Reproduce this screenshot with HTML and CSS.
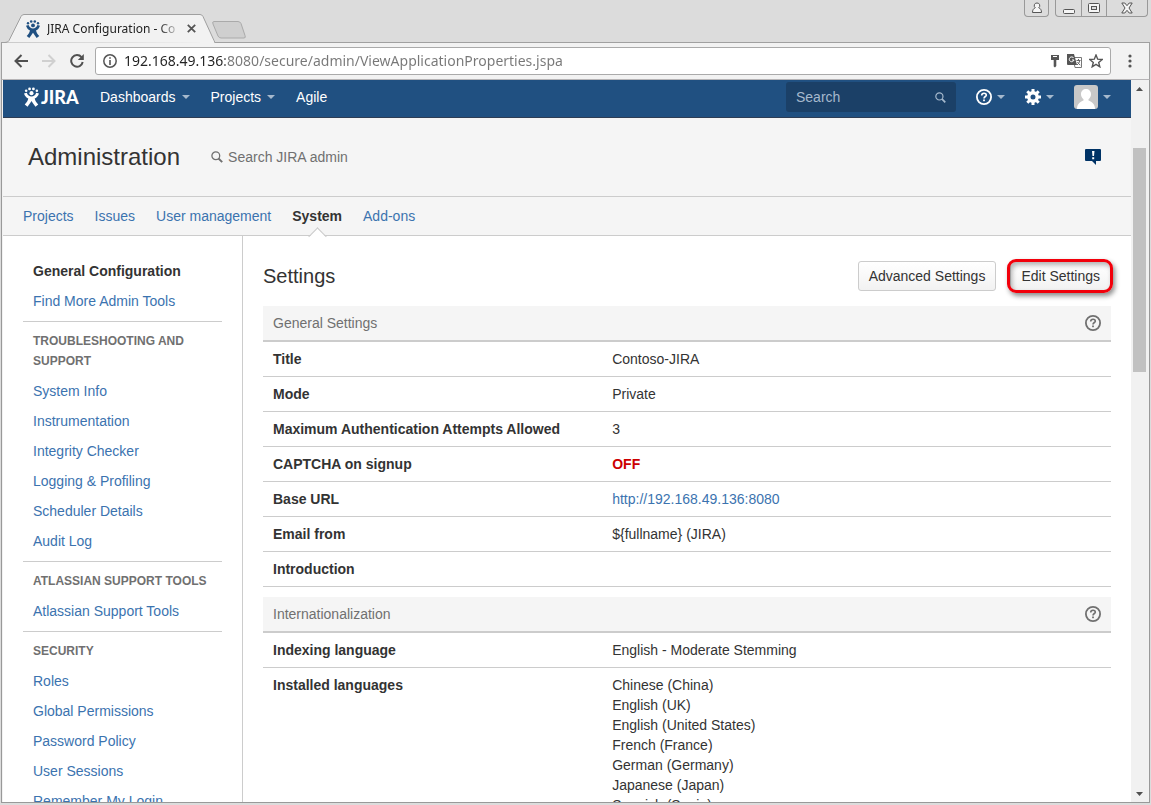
FILE: index.html
```html
<!DOCTYPE html>
<html lang="en">
<head>
<meta charset="utf-8">
<title>JIRA Configuration - Contoso-JIRA</title>
<link rel="stylesheet" href="styles.css">
</head>
<body>
<svg class="defs" aria-hidden="true">
  <symbol id="charlie" viewBox="0 0 14 18">
    <circle cx="2" cy="3.200" r="1.200"/><circle cx="5.200" cy="1.500" r="1.300"/><circle cx="8.800" cy="1.500" r="1.300"/><circle cx="12" cy="3.200" r="1.200"/>
    <circle cx="7" cy="5.400" r="1.900"/>
    <path d="M0 5.800 2.600 5C3.400 7.300 5 8.500 7 8.500S10.600 7.300 11.400 5l2.600.8C13.200 8.200 12 9.600 10 10.500c.5 2.200 1.600 3.800 3.300 5.500L10.700 18C9 16 8.300 14.600 7 12.800 5.700 14.600 5 16 3.300 18L.7 16c1.700-1.700 2.800-3.300 3.300-5.500C2 9.600.8 8.200 0 5.800z"/>
  </symbol>
  <symbol id="help" viewBox="0 0 16 16">
    <circle cx="8" cy="8" r="7.100" fill="none" stroke="currentColor" stroke-width="1.800"/>
    <path d="M5.700 6.500C5.700 5 6.700 4.200 8 4.200s2.300.8 2.300 2S8 7.700 8 9.400" fill="none" stroke="currentColor" stroke-width="1.600"/>
    <rect x="7.100" y="10.500" width="1.800" height="1.700"/>
  </symbol>
  <symbol id="lens" viewBox="0 0 12 12">
    <circle cx="4.800" cy="4.800" r="3.900" fill="none" stroke="currentColor" stroke-width="1.300"/>
    <path d="m7.500 7.500 3.700 3.700" fill="none" stroke="currentColor" stroke-width="1.900"/>
  </symbol>
</svg>
<div class="window">
  <header class="tabstrip">
    <div class="tab">
      <svg class="tab-shape" viewBox="0 0 214 29" aria-hidden="true"><path d="M0 28.500h4q3 0 4-2L20 2.500q1-2 3-2h176q2 0 3 2l11 24q1 2 1 2.500" fill="#f2f2f2" stroke="#a0a0a0"/></svg>
      <svg class="favicon" fill="#205081"><use href="#charlie"/></svg>
      <span class="tab-title">JIRA Configuration - Co</span>
      <button class="tab-close" aria-label="Close tab"><svg width="9" height="9" viewBox="0 0 9 9"><path d="m.8.8 7.400 7.400m0-7.400L.8 8.200" stroke="#555" stroke-width="1.800"/></svg></button>
    </div>
    <button class="new-tab" aria-label="New tab"><svg width="36" height="18" viewBox="0 0 36 18"><path d="M3 .5h24q2 0 3 2l4 12q1 2.500-1 2.500H10q-2 0-3-2L2 3Q1 .5 3 .5z" fill="#cfcfcf" stroke="#aaa"/></svg></button>
    <div class="window-controls">
      <button class="wc wc-user" aria-label="User"><svg width="12" height="12" viewBox="0 0 12 12"><path d="M6 1a2.600 2.600 0 0 1 1.700 4.700C9.500 6.500 10.500 8 10.500 10.500h-9C1.500 8 2.500 6.500 4.300 5.700A2.600 2.600 0 0 1 6 1z" fill="#f5f5f5" stroke="#555"/></svg></button>
      <div class="wc-group">
        <button class="wc" aria-label="Minimize"><svg width="12" height="12" viewBox="0 0 12 12"><rect x=".5" y="7.500" width="11" height="4" rx="1" fill="#f5f5f5" stroke="#555"/></svg></button>
        <button class="wc" aria-label="Restore"><svg width="12" height="12" viewBox="0 0 12 12"><rect x=".5" y="1.500" width="11" height="9" rx="1" fill="#f5f5f5" stroke="#555"/><rect x="3.500" y="4.500" width="5" height="3" fill="#dedede" stroke="#555"/></svg></button>
        <button class="wc wc-close" aria-label="Close"><svg width="12" height="12" viewBox="0 0 12 12"><path d="M.8 1h3L6 3.700 8.200 1h3L8 6l3.200 5h-3L6 8.300 3.800 11h-3L4 6z" fill="#f5f5f5" stroke="#555"/></svg></button>
      </div>
    </div>
  </header>

  <div class="toolbar">
    <button class="tool" aria-label="Back"><svg width="14" height="14" viewBox="0 0 14 14"><path d="M14 7H1.500M7.500 1 1.500 7l6 6" fill="none" stroke="#505050" stroke-width="2"/></svg></button>
    <button class="tool" aria-label="Forward" disabled><svg width="14" height="14" viewBox="0 0 14 14"><path d="M0 7h12.500M6.500 1l6 6-6 6" fill="none" stroke="#d0d0d0" stroke-width="2"/></svg></button>
    <button class="tool" aria-label="Reload"><svg width="14" height="14" viewBox="0 0 14 14"><path d="M11.500 3.200A5.800 5.800 0 1 0 12.700 8" fill="none" stroke="#505050" stroke-width="2"/><path d="M13.800 0v6H7.800z" fill="#505050"/></svg></button>
    <div class="omnibox">
      <svg width="14" height="14" viewBox="0 0 14 14" aria-hidden="true"><circle cx="7" cy="7" r="6.200" fill="none" stroke="#555" stroke-width="1.500"/><path d="M6.200 3.200h1.600v1.600H6.200zm0 2.800h1.600v5H6.200z" fill="#555"/></svg>
      <input class="url" type="text" aria-label="Address" value="192.168.49.136:8080/secure/admin/ViewApplicationProperties.jspa">
      <svg width="10" height="14" viewBox="0 0 10 14" aria-hidden="true"><path d="M1 1h8v5H6.300v6L5 13.500 3.700 12.500V6H1z" fill="#555"/><path d="M3 2.500h4" stroke="#fff"/></svg>
      <svg width="15" height="14" viewBox="0 0 15 14" aria-hidden="true"><path d="M6 3.500h8.500v10H8z" fill="#fff" stroke="#777"/><path d="M0 0h7l3 11H1q-1 0-1-1z" fill="#555"/><path d="M6.700 4A2.400 2.400 0 1 0 7 6H5" fill="none" stroke="#fff"/><path d="M9.500 6.500h4M11.500 5v1.500m1.300 0q-.5 3-2.800 4.500m.5-3q1 2 2.800 3" fill="none" stroke="#666"/></svg>
      <svg width="14" height="14" viewBox="0 0 14 14" aria-hidden="true"><path d="m7 1 1.700 4.200 4.500.3-3.500 2.900 1.100 4.400L7 10.400l-3.800 2.400 1.100-4.400L.8 5.500l4.500-.3z" fill="none" stroke="#555" stroke-width="1.400"/></svg>
    </div>
    <button class="tool menu" aria-label="Menu"><svg width="4" height="14" viewBox="0 0 4 14" fill="#555"><circle cx="2" cy="2" r="1.600"/><circle cx="2" cy="7" r="1.600"/><circle cx="2" cy="12" r="1.600"/></svg></button>
  </div>

  <div class="viewport">
    <div class="page">
      <header class="jira-header">
        <a class="logo" href="#"><svg class="logo-mark" fill="#fff" aria-hidden="true"><use href="#charlie"/></svg>JIRA</a>
        <nav class="main-nav" aria-label="Main">
          <button class="drop">Dashboards</button>
          <button class="drop">Projects</button>
          <button>Agile</button>
        </nav>
        <div class="quick-search">
          <input type="text" placeholder="Search" aria-label="Search">
          <svg width="11" height="11"><use href="#lens"/></svg>
        </div>
        <div class="user-nav">
          <button class="drop" aria-label="Help"><svg width="16" height="16" fill="currentColor"><use href="#help"/></svg></button>
          <button class="drop" aria-label="Administration"><svg width="16" height="16" viewBox="0 0 16 16"><circle cx="8" cy="8" r="4.200" fill="none" stroke="#fff" stroke-width="3.400"/><path d="M8 0v3.500M8 12.500V16M0 8h3.500M12.500 8H16M2.300 2.300l2.500 2.500m6.400 6.400 2.500 2.500m0-11.400-2.500 2.500m-6.400 6.400-2.500 2.500" stroke="#fff" stroke-width="3"/></svg></button>
          <button class="drop" aria-label="User profile"><svg width="24" height="24" viewBox="0 0 24 24"><rect width="24" height="24" rx="3" fill="#c8c8c8"/><path d="M3 24c0-5 3-7 6.500-8.500v-1.300C8 13 7 11.500 7 9.300 7 6 9.200 4 12 4s5 2 5 5.300c0 2.200-1 3.700-2.500 4.900v1.300C18 17 21 19 21 24z" fill="#fff"/></svg></button>
        </div>
      </header>

      <div class="admin-header">
        <h1>Administration</h1>
        <label class="admin-search">
          <svg width="12" height="12"><use href="#lens"/></svg>
          <input type="text" placeholder="Search JIRA admin" aria-label="Search JIRA admin">
        </label>
        <button class="feedback" aria-label="Give feedback"><svg width="16" height="16" viewBox="0 0 16 16"><path d="M1 0h14q1 0 1 1v10q0 1-1 1h-4v4l-4-4H1q-1 0-1-1V1q0-1 1-1z" fill="#036"/><path d="M7 2h2.500L9 7H7.500zM7.200 8.300H9.200v1.900H7.200z" fill="#fff"/></svg></button>
      </div>

      <nav class="admin-nav" aria-label="Administration">
        <a href="#">Projects</a>
        <a href="#">Issues</a>
        <a href="#">User management</a>
        <a class="current" href="#" aria-current="page">System</a>
        <a href="#">Add-ons</a>
      </nav>

      <div class="columns">
        <nav class="sidebar" aria-label="System">
          <section>
            <a class="current" href="#">General Configuration</a>
            <a href="#">Find More Admin Tools</a>
          </section>
          <section>
            <h2>Troubleshooting and Support</h2>
            <a href="#">System Info</a>
            <a href="#">Instrumentation</a>
            <a href="#">Integrity Checker</a>
            <a href="#">Logging &amp; Profiling</a>
            <a href="#">Scheduler Details</a>
            <a href="#">Audit Log</a>
          </section>
          <section>
            <h2>Atlassian Support Tools</h2>
            <a href="#">Atlassian Support Tools</a>
          </section>
          <section>
            <h2>Security</h2>
            <a href="#">Roles</a>
            <a href="#">Global Permissions</a>
            <a href="#">Password Policy</a>
            <a href="#">User Sessions</a>
            <a href="#">Remember My Login</a>
          </section>
        </nav>

        <main class="content">
          <div class="content-header">
            <h2>Settings</h2>
            <button class="btn">Advanced Settings</button>
            <button class="btn highlighted">Edit Settings</button>
          </div>

          <table class="settings">
            <colgroup><col class="name-col"><col></colgroup>
            <thead><tr><th colspan="2"><div class="group-head">General Settings<a href="#" aria-label="Help"><svg width="16" height="16" fill="currentColor"><use href="#help"/></svg></a></div></th></tr></thead>
            <tbody>
              <tr><th scope="row">Title</th><td>Contoso-JIRA</td></tr>
              <tr><th scope="row">Mode</th><td>Private</td></tr>
              <tr><th scope="row">Maximum Authentication Attempts Allowed</th><td>3</td></tr>
              <tr><th scope="row">CAPTCHA on signup</th><td><strong class="off">OFF</strong></td></tr>
              <tr><th scope="row">Base URL</th><td><a href="#">http://192.168.49.136:8080</a></td></tr>
              <tr><th scope="row">Email from</th><td>${fullname} (JIRA)</td></tr>
              <tr><th scope="row">Introduction</th><td></td></tr>
            </tbody>
          </table>

          <table class="settings">
            <colgroup><col class="name-col"><col></colgroup>
            <thead><tr><th colspan="2"><div class="group-head">Internationalization<a href="#" aria-label="Help"><svg width="16" height="16" fill="currentColor"><use href="#help"/></svg></a></div></th></tr></thead>
            <tbody>
              <tr><th scope="row">Indexing language</th><td>English - Moderate Stemming</td></tr>
              <tr><th scope="row">Installed languages</th><td>Chinese (China)<br>English (UK)<br>English (United States)<br>French (France)<br>German (Germany)<br>Japanese (Japan)<br>Spanish (Spain)</td></tr>
            </tbody>
          </table>
        </main>
      </div>
    </div>

    <div class="scrollbar">
      <button aria-label="Scroll up"><svg width="7" height="4" viewBox="0 0 7 4"><path d="M0 4h7L3.500 0z" fill="#505050"/></svg></button>
      <div class="track"><div class="thumb"></div></div>
      <button aria-label="Scroll down"><svg width="7" height="4" viewBox="0 0 7 4"><path d="M0 0h7L3.500 4z" fill="#505050"/></svg></button>
    </div>
  </div>
</div>
</body>
</html>
```
FILE: styles.css
```css
* { box-sizing: border-box; }
body {
  margin: 0;
  background: #dcdcdc;
  color: #333;
  font: 14px/20px "Liberation Sans", Arial, sans-serif;
}
h1, h2 { margin: 0; font-weight: 400; }
a { color: #3b73af; text-decoration: none; }
button {
  border: 0;
  padding: 0;
  background: none;
  color: inherit;
  font: inherit;
}
input {
  min-width: 0;
  border: 0;
  padding: 0;
  background: none;
  color: inherit;
  font: inherit;
  outline: 0;
}
svg { display: block; flex: none; }
.defs { position: absolute; width: 0; height: 0; }

.window {
  display: flex;
  flex-direction: column;
  height: 100vh;
  padding: 0 1px 2px;
  overflow: hidden;
}

/* Tab strip */
.tabstrip {
  display: flex;
  align-items: flex-end;
  height: 42px;
  flex: none;
}
.tab {
  position: relative;
  z-index: 1;
  display: flex;
  align-items: center;
  width: 214px;
  height: 29px;
  margin-bottom: -1px;
  padding: 0 18px 0 25px;
  font: 12px/16px "Noto Sans", sans-serif;
  color: #222;
}
.tab-shape {
  position: absolute;
  inset: 0;
  width: 214px;
  height: 29px;
}
.favicon { position: relative; width: 14px; height: 18px; }
.tab-title {
  position: relative;
  width: 134px;
  margin-left: 7px;
  overflow: hidden;
  white-space: nowrap;
  mask-image: linear-gradient(90deg, #000 112px, transparent 134px);
}
.tab-close { position: relative; margin-left: 6px; }
.new-tab { margin: 0 0 3px -4px; }
.window-controls {
  display: flex;
  gap: 6px;
  align-self: flex-start;
  margin-left: auto;
  padding-right: 2px;
}
.wc {
  display: grid;
  place-items: center;
  width: 25px;
  height: 16px;
}
.wc-user, .wc-group {
  border: 1px solid #999;
  border-top: 0;
  border-radius: 0 0 4px 4px;
}
.wc-user { height: 17px; }
.wc-group { display: flex; }
.wc-group .wc + .wc { border-left: 1px solid #999; }
.wc-group .wc-close { width: 41px; }

/* Toolbar */
.toolbar {
  display: flex;
  align-items: center;
  flex: none;
  gap: 14px;
  height: 38px;
  padding: 0 17px 0 12px;
  border: 1px solid #a0a0a0;
  border-bottom-color: #b6b4b6;
  background: #f2f2f2;
}
.omnibox {
  display: flex;
  align-items: center;
  flex: 1;
  gap: 7px;
  height: 28px;
  margin: 0 3px 0 -3px;
  padding: 0 7px;
  border: 1px solid #aaa;
  border-radius: 3px;
  background: #fff;
}
.url {
  flex: 1;
  font: 14px/20px "Noto Sans", sans-serif;
  color: #777;
  background: linear-gradient(90deg, #222 101px, #777 101px);
  background-clip: text;
  -webkit-text-fill-color: transparent;
}

/* Viewport */
.viewport {
  display: flex;
  flex: 1;
  min-height: 0;
  padding: 0 1px;
  border: 1px solid #999;
  border-top: 0;
  background: #f2f2f2;
}
.page {
  flex: 1;
  min-width: 0;
  overflow: hidden;
  background: #fff;
}
.scrollbar {
  display: flex;
  flex-direction: column;
  flex: none;
  width: 17px;
  background: #f1f1f1;
}
.scrollbar button { display: grid; place-items: center; height: 17px; }
.track { flex: 1; padding: 51px 2px 0; }
.thumb { height: 224px; background: #c1c1c1; }

/* JIRA header */
.jira-header {
  display: flex;
  align-items: center;
  height: 38px;
  padding: 0 20px 3px 21px;
  border-bottom: 1px solid #2e3d54;
  background: #205081;
  color: #fff;
}
.logo {
  display: flex;
  align-items: center;
  width: 56px;
  gap: 2px;
  color: #fff;
  font: 900 18px/20px Lato, sans-serif;
}
.logo-mark { width: 15px; height: 20px; }
.main-nav { display: flex; gap: 21px; margin-left: 20px; }
.drop { display: flex; align-items: center; gap: 5px; }
.main-nav .drop { gap: 6px; }
.drop::after {
  content: "";
  border: 4px solid transparent;
  border-top-color: #a6b9cd;
  border-bottom: 0;
}
.quick-search {
  display: flex;
  align-items: center;
  width: 170px;
  height: 30px;
  margin-left: auto;
  padding: 0 10px;
  border-radius: 3px;
  background: #1b4067;
  color: #a6b9cd;
}
.quick-search input { flex: 1; }
.quick-search input::placeholder { color: #a6b9cd; }
.user-nav { display: flex; align-items: center; gap: 20px; margin-left: 20px; }

/* Administration header */
.admin-header {
  display: flex;
  align-items: center;
  height: 79px;
  padding: 0 30px 0 25px;
  border-bottom: 1px solid #ccc;
  background: #f5f5f5;
}
.admin-header h1 { font-size: 24px; line-height: 30px; }
.admin-search {
  display: flex;
  align-items: center;
  gap: 5px;
  margin-left: 31px;
  color: #707070;
}
.admin-search input { width: 160px; }
.admin-search input::placeholder { color: #707070; }
.feedback { margin-left: auto; }
.admin-nav {
  display: flex;
  gap: 21px;
  padding: 9px 20px;
  border-bottom: 1px solid #ccc;
  background: #f5f5f5;
}
.admin-nav .current {
  position: relative;
  color: #333;
  font-weight: 700;
}
.admin-nav .current::after {
  content: "";
  position: absolute;
  top: 24px;
  left: calc(50% - 6px);
  width: 12px;
  height: 12px;
  border: 1px solid #ccc;
  border-width: 1px 0 0 1px;
  background: linear-gradient(135deg, #fff 50%, transparent 50%);
  transform: rotate(45deg);
}

/* Columns */
.columns { display: flex; align-items: stretch; }
.sidebar {
  flex: none;
  width: 240px;
  padding: 20px;
  border-right: 1px solid #ccc;
}
.sidebar section { padding-bottom: 5px; }
.sidebar section + section { padding-top: 4px; border-top: 1px solid #ccc; }
.sidebar a, .sidebar h2 { display: block; padding: 5px 10px; }
.sidebar h2 {
  color: #707070;
  font-size: 12px;
  font-weight: 700;
  text-transform: uppercase;
}
.sidebar .current { color: #333; font-weight: 700; }
.content { flex: 1; min-width: 0; padding: 20px; }
.content-header {
  display: flex;
  align-items: center;
  height: 40px;
  margin-bottom: 10px;
}
.content-header h2 { margin-right: auto; font-size: 20px; }
.btn {
  height: 30px;
  padding: 4px 10px;
  border: 1px solid #ccc;
  border-radius: 3px;
  background: linear-gradient(#fff, #f2f2f2);
}
.highlighted { position: relative; margin-left: 14px; }
.highlighted::after {
  content: "";
  position: absolute;
  inset: -3px -3px -3px -4px;
  border: 3px solid #f2000b;
  border-radius: 9px;
  box-shadow: 2px 3px 5px rgba(0, 0, 0, .45), inset 2px 3px 5px rgba(0, 0, 0, .3);
}

.settings {
  width: 100%;
  margin-bottom: 10px;
  border-collapse: separate;
  border-spacing: 0;
  table-layout: fixed;
}
.name-col { width: 40%; }
.settings th, .settings td {
  padding: 7px 10px;
  border-bottom: 1px solid #ccc;
  text-align: left;
  vertical-align: top;
}
.settings thead th {
  border-bottom-width: 2px;
  background: #f5f5f5;
  color: #707070;
  font-weight: 400;
}
.group-head { display: flex; align-items: center; justify-content: space-between; }
.group-head a { color: #707070; }
.off { color: #c00; }
```
